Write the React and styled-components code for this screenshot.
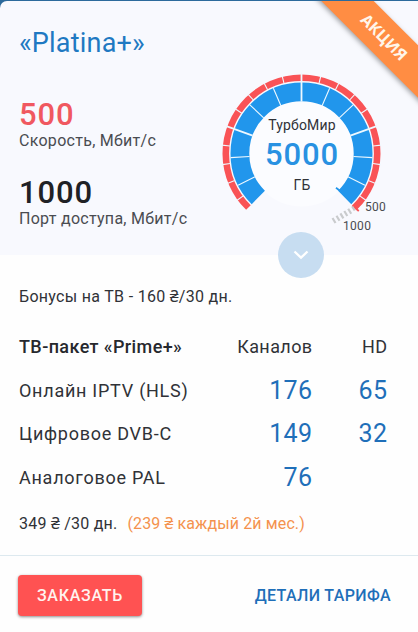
import React from "react";
import styled, { createGlobalStyle } from "styled-components";

const GlobalStyle = createGlobalStyle`
  *, *::before, *::after { box-sizing: border-box; }
  body {
    margin: 0;
    background: #2c6a9c;
    font-family: Roboto, "Noto Sans", sans-serif;
    color: #303237;
  }
`;

const Card = styled.article`
  position: relative;
  height: 632px;
  display: flex;
  flex-direction: column;
  overflow: hidden;
  border-top: 1px solid #2c6a9c;
`;

const Hero = styled.header`
  height: 254px;
  display: flex;
  background: #f8f9fe;
  border-radius: 7px 0 0 0;
`;

const Summary = styled.div`
  width: 203px;
  padding: 22px 0 0 19px;
`;

const Title = styled.h2`
  margin: 0 0 37px;
  font-size: 27px;
  line-height: 40px;
  font-weight: 400;
  letter-spacing: 0.2px;
  color: #1f79c2;
  white-space: nowrap;
`;

const Metric = styled.div`
  height: 78px;
`;

const MetricValue = styled.div`
  font-size: 31px;
  line-height: 30px;
  font-weight: 500;
  letter-spacing: 0.9px;
  color: ${(p) => (p.$accent ? "#f05860" : "#202125")};
`;

const MetricLabel = styled.div`
  font-size: 16px;
  line-height: 22px;
  letter-spacing: 0.28px;
  white-space: nowrap;
  color: #4a4c51;
`;

const Gauge = styled.div`
  position: relative;
  width: 215px;
  height: 254px;
`;

const GaugeArt = styled.svg`
  display: block;
`;

const GaugeText = styled.div`
  position: absolute;
  left: 49px;
  top: 110px;
  width: 100px;
  text-align: center;
  white-space: nowrap;
`;

const GaugeCaption = styled.div`
  font-size: 14px;
  line-height: 28px;
  letter-spacing: 0.15px;
`;

const GaugeValue = styled.div`
  font-size: 31px;
  line-height: 31px;
  margin-bottom: 1px;
  font-weight: 500;
  letter-spacing: 0.9px;
  color: #2891e2;
`;

const ScaleMark = styled.span`
  position: absolute;
  left: ${(p) => p.$x}px;
  top: ${(p) => p.$y}px;
  font-size: 12px;
  line-height: 14px;
  letter-spacing: 0.3px;
  color: #4a4c51;
`;

const Expand = styled.button`
  position: absolute;
  left: 278px;
  top: 231px;
  width: 46px;
  height: 46px;
  padding: 0;
  border: 0;
  border-radius: 50%;
  background: #c7ddf1;
  display: grid;
  place-items: center;
`;

const Ribbon = styled.div`
  position: absolute;
  left: 281px;
  top: 15px;
  width: 200px;
  height: 37px;
  padding-left: 8px;
  transform: rotate(45deg);
  background: #ff8d43;
  box-shadow: 0 2px 5px rgba(0, 0, 0, 0.35);
  color: #fff6ea;
  font: 700 16px/36px "Open Sans", "Noto Sans", sans-serif;
  letter-spacing: 0;
  text-align: center;
`;

const Body = styled.section`
  height: 300px;
  padding: 30px 0 0 19px;
  background: #fefefe;
`;

const Bonus = styled.div`
  font-size: 16px;
  line-height: 24px;
  letter-spacing: 0.3px;
  margin-bottom: 16px;
`;

const Channels = styled.div`
  display: grid;
  grid-template-columns: 195px 98.5px 75px;
  grid-template-rows: 43px 44px 43px 44px;
  align-items: center;
  white-space: nowrap;
`;

const Label = styled.div`
  font-size: 18px;
  font-weight: ${(p) => (p.$bold ? 500 : 400)};
  letter-spacing: ${(p) => (p.$bold ? 0.4 : p.$end ? 0.4 : 0.74)}px;
  text-align: ${(p) => (p.$end ? "right" : "left")};
  color: ${(p) => (p.$bold ? "#26282d" : "inherit")};
`;

const Count = styled.div`
  font-size: 25px;
  letter-spacing: 0.4px;
  text-align: right;
  color: #1f6fb9;
`;

const Price = styled.div`
  display: flex;
  gap: 10px;
  margin-top: 13px;
  font-size: 16px;
  line-height: 24px;
  letter-spacing: 0.24px;
  white-space: nowrap;
`;

const Offer = styled.span`
  color: #f4924e;
  letter-spacing: 0.12px;
`;

const Actions = styled.footer`
  flex: 1;
  display: flex;
  justify-content: space-between;
  align-items: flex-start;
  padding: 19px 27px 0 18px;
  border-top: 1px solid #dde9ef;
  background: #fefefe;
`;

const Order = styled.button`
  width: 124px;
  height: 41px;
  padding: 0;
  border: 0;
  border-radius: 4px;
  background: #ff5252;
  color: #fff3ee;
  font: 500 16px/41px Roboto, sans-serif;
  letter-spacing: 0.7px;
  box-shadow: 0 1px 3px rgba(0, 0, 0, 0.45);
`;

const Details = styled.a`
  font-size: 16px;
  line-height: 41px;
  font-weight: 500;
  color: #1f6fb9;
  letter-spacing: 0.36px;
`;

const CX = 98.5;
const CY = 152.5;

const at = (deg, r) => {
  const a = (deg * Math.PI) / 180;
  return `${CX + r * Math.sin(a)} ${CY - r * Math.cos(a)}`;
};

const arc = (r, end) => `M${at(-end, r)} A${r} ${r} 0 1 1 ${at(end, r)}`;

const blueTicks = [-5, -4, -2, -1, 1, 2, 4, 5].map((n) => (n * 70) / 3);
const redTicks = [-9, -8, -7, -6, -4, -3, -2, -1, 1, 2, 3, 4, 6, 7, 8, 9].map((n) => n * 14);
const majorTicks = [-70, 0, 70];

const ray = (deg, r1, r2) => `M${at(deg, r1)} L${at(deg, r2)}`;

function Dial() {
  return (
    <GaugeArt width="215" height="254" viewBox="0 0 215 254" fill="none">
      <circle cx={CX} cy={CY} r="53" fill="#fbfcff" />
      <path d={arc(75.7, 135.5)} stroke="#f95356" strokeWidth="6.6" />
      <path d={arc(61.6, 135.5)} stroke="#2196ec" strokeWidth="18.8" />
      <g stroke="#edf8ff">
        <path d={blueTicks.map((d) => ray(d, 52, 71)).join("")} strokeWidth="1.1" />
        <path d={redTicks.map((d) => ray(d, 72, 80)).join("")} strokeWidth="1.1" />
        <path d={majorTicks.map((d) => ray(d, 52, 80)).join("")} strokeWidth="1.8" />
      </g>
      <path d="M133 186.8 L138.5 191" stroke="#2196ec" strokeWidth="1.8" />
      <path d="M149.3 204.5 L155.8 210" stroke="#f95356" strokeWidth="1.8" />
      <path
        d="M129.5 217l3 5M133.5 214.8l3 5M137.4 212.4l3 5M141.3 210l3 5M145.2 207.8l3 5M149.2 205.5l2.5 4"
        stroke="#c9cbcd"
        strokeWidth="2.2"
      />
    </GaugeArt>
  );
}

const channels = [
  { name: "Онлайн IPTV (HLS)", total: 176, hd: 65 },
  { name: "Цифровое DVB-C", total: 149, hd: 32 },
  { name: "Аналоговое PAL", total: 76, hd: "" },
];

export default function App() {
  return (
    <>
      <GlobalStyle />
      <Card>
        <Hero>
          <Summary>
            <Title>«Platina+»</Title>
            <Metric>
              <MetricValue $accent>500</MetricValue>
              <MetricLabel>Скорость, Мбит/с</MetricLabel>
            </Metric>
            <Metric>
              <MetricValue>1000</MetricValue>
              <MetricLabel>Порт доступа, Мбит/с</MetricLabel>
            </Metric>
          </Summary>
          <Gauge>
            <Dial />
            <GaugeText>
              <GaugeCaption>ТурбоМир</GaugeCaption>
              <GaugeValue>5000</GaugeValue>
              <GaugeCaption>ГБ</GaugeCaption>
            </GaugeText>
            <ScaleMark $x={162} $y={199}>500</ScaleMark>
            <ScaleMark $x={140} $y={218}>1000</ScaleMark>
          </Gauge>
        </Hero>
        <Body>
          <Bonus>Бонусы на ТВ - 160 ₴/30 дн.</Bonus>
          <Channels>
            <Label $bold>ТВ-пакет «Prime+»</Label>
            <Label $end>Каналов</Label>
            <Label $end>HD</Label>
            {channels.map((c) => (
              <React.Fragment key={c.name}>
                <Label>{c.name}</Label>
                <Count>{c.total}</Count>
                <Count>{c.hd}</Count>
              </React.Fragment>
            ))}
          </Channels>
          <Price>
            <span>349 ₴ /30 дн.</span>
            <Offer>(239 ₴ каждый 2й мес.)</Offer>
          </Price>
        </Body>
        <Actions>
          <Order>ЗАКАЗАТЬ</Order>
          <Details>ДЕТАЛИ ТАРИФА</Details>
        </Actions>
        <Ribbon>АКЦИЯ</Ribbon>
        <Expand aria-label="Развернуть">
          <svg width="16" height="10" viewBox="0 0 16 10" fill="none">
            <path d="M1.5 1.5 L8 7.7 L14.5 1.5" stroke="#fff" strokeWidth="2.3" />
          </svg>
        </Expand>
      </Card>
    </>
  );
}
